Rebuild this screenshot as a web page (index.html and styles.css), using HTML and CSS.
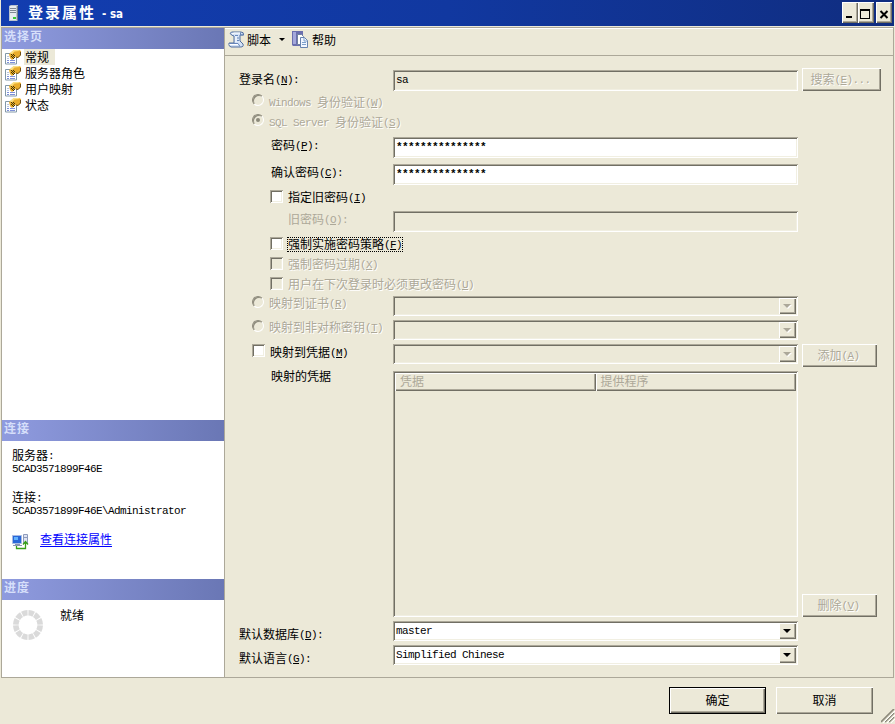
FILE: index.html
```html
<!DOCTYPE html>
<html lang="zh-CN">
<head>
<meta charset="utf-8">
<title>登录属性 - sa</title>
<link rel="stylesheet" href="styles.css">
</head>
<body>
<svg width="0" height="0" class="defs" aria-hidden="true">
  <symbol id="page" viewBox="0 0 16 16">
    <path d="M.5 4.500h11v10.500H.5z" fill="#fff" stroke="#8298a8"/>
    <path d="M2 11.500h2m1 0h5M2 13.500h2m1 0h5" stroke="#7d8fd8"/>
    <path d="M2 7.500h2M2 9.500h2" stroke="#b9c5df"/>
    <path d="M4 5l5-4h5l2 1v4l-3 3-3-1-3 3-2-2z" fill="#e9ad2c"/>
    <path d="M5 4l3.500-3h5l1 1-5 .5-3 3z" fill="#fbe184"/>
    <path d="M15.500 3v3L13 8.500l-2-.5" fill="none" stroke="#6e4f18"/>
    <path d="M6 5h1v1H6zm2 0h1v1H8zM7 6h1v1H7zm2 0h1v1H9zM6 7h1v1H6zm2 0h1v1H8zM7 8h1v1H7zm2 0h1v1H9zM8 9h1v1H8z" fill="#423508"/>
  </symbol>
  <symbol id="grip" viewBox="0 0 14 14">
    <path d="M0 13L13 0M4 13l9-9M8 13l5-5" stroke="#8d8a7c" stroke-width="1.700"/>
    <path d="M2 14L14 2M6 14l8-8M10 14l4-4" stroke="#fff"/>
  </symbol>
</svg>
<header class="titlebar">
  <svg class="server" width="12" height="18" viewBox="0 0 12 18"><path d="M1 2l2-1h7v15l-1 1H1z" fill="#b9c3cf"/><path d="M2 2h6v14H2z" fill="#e6ebf0"/><path d="M9 2h1v14H9z" fill="#6f7d8d"/><path d="M2 4.500h6M2 6.500h6M2 8.500h6" stroke="#7d8792"/><path d="M5 13h3v2H5z" fill="#35c837"/></svg>
  <h1>登录属性</h1><span class="who">- sa</span>
  <div class="wbtns">
    <button><svg width="15" height="21"><path d="M4 14h6v2H4z"/></svg></button>
    <button><svg width="15" height="21"><path d="M2 7h10v10H2zM3 9v7h8V9z" fill-rule="evenodd"/></svg></button>
    <button class="close"><svg width="15" height="21"><path d="M4.500 9l7 7m0-7l-7 7" stroke="#000" stroke-width="2"/></svg></button>
  </div>
</header>
<div class="body">
  <aside>
    <h2>选择页</h2>
    <ul class="pages">
      <li><svg><use href="#page"/></svg><span class="sel">常规</span></li>
      <li><svg><use href="#page"/></svg><span>服务器角色</span></li>
      <li><svg><use href="#page"/></svg><span>用户映射</span></li>
      <li><svg><use href="#page"/></svg><span>状态</span></li>
    </ul>
    <h2>连接</h2>
    <div class="conn">
      <p>服务器<i>:</i></p><p><i>5CAD3571899F46E</i></p>
      <p class="second">连接<i>:</i></p><p><i>5CAD3571899F46E\Administrator</i></p>
      <div class="link"><svg width="17" height="16" viewBox="0 0 17 16"><path d="M.5 1.500h9v8h-9z" fill="#2867d8" stroke="#a9bbe4"/><path d="M2 3h4v3H2z" fill="#63b3ff"/><path d="M3 10h5v1h2v1H1v-1h2z" fill="#8793b3"/><path d="M11.500.5h4v9h-4z" fill="#dfe4f3" stroke="#8e9bbb"/><path d="M12 3.500h3" stroke="#8e9bbb"/><path d="M4.500 12v2.500h9V9M11 10.500l2.500-3 2.500 3" fill="none" stroke="#38a018" stroke-width="1.300"/></svg><a>查看连接属性</a></div>
    </div>
    <h2>进度</h2>
    <div class="progress">
      <svg width="32" height="32" viewBox="-16 -16 32 32"><circle r="12.200" fill="none" stroke="#dadada" stroke-width="5.600" pathLength="120" stroke-dasharray="8.500 1.500" stroke-dashoffset="-.75"/></svg>
      <span>就绪</span>
    </div>
  </aside>
  <main>
    <div class="toolbar">
      <svg width="17" height="17" viewBox="0 0 17 17"><path d="M3.500 1H13q3 0 2.500 3H12v6l3 3q1 3-2.500 3H3q-3-1-2-4h5V5L3.500 4Q1 2 3.500 1z" fill="#d5e3f7" stroke="#4f6c9d"/><path d="M4 3l2-1h6M8 5v6M1.500 13.500h9" fill="none" stroke="#fff"/><path d="M7 4.500h3M9 7h2M9 9.500h2M2 12.500h8l2 3M12.500 1.500V4h3" fill="none" stroke="#6786ba"/></svg>
      <span class="t1">脚本</span><svg class="tri" width="6" height="3"><path d="M0 0h6L3 3z"/></svg>
      <svg class="help" width="16" height="17" viewBox="0 0 16 17"><path d="M0 0h11v15H1l-1-1z" fill="#6b6fae"/><path d="M1 1h3v12H1z" fill="#a4a8db"/><path d="M5.500 3.500h4l2 2v8h-6z" fill="#fff" stroke="#71829f"/><path d="M8.500 6.500h4l3 3v7h-7z" fill="#f2f7ff" stroke="#6783ae"/><path d="M10 11.500h4M10 13.500h4M12 7v3h3" fill="none" stroke="#7ca0cc"/></svg>
      <span>帮助</span>
    </div>
    <form class="form">
      <div class="row r-name"><label>登录名<i>(<u>N</u>):</i></label><div class="field off"><i>sa</i></div><button class="btn wide off">搜索<i>(<u>E</u>)...</i></button></div>
      <div class="row dis in1"><b class="radio"></b><label><i>Windows </i>身份验证<i>(<u>W</u>)</i></label></div>
      <div class="row dis in1"><b class="radio on"></b><label><i>SQL Server </i>身份验证<i>(<u>S</u>)</i></label></div>
      <div class="row r28 in2"><label>密码<i>(<u>P</u>):</i></label><div class="field pass"><i>***************</i></div></div>
      <div class="row r27 in2"><label>确认密码<i>(<u>C</u>):</i></label><div class="field pass"><i>***************</i></div></div>
      <div class="row in2c"><b class="check"></b><label>指定旧密码<i>(<u>I</u>)</i></label></div>
      <div class="row r27 in3 flat"><label>旧密码<i>(<u>O</u>):</i></label><div class="field off"></div></div>
      <div class="row in2c"><b class="check"></b><label class="focus">强制实施密码策略<i>(<u>F</u>)</i></label></div>
      <div class="row in2c dis"><b class="check"></b><label>强制密码过期<i>(<u>X</u>)</i></label></div>
      <div class="row in2c dis"><b class="check"></b><label>用户在下次登录时必须更改密码<i>(<u>U</u>)</i></label></div>
      <div class="row r24 dis in1"><b class="radio"></b><label>映射到证书<i>(<u>R</u>)</i></label><div class="field combo off"><span class="drop"></span></div></div>
      <div class="row r24 dis in1"><b class="radio"></b><label>映射到非对称密钥<i>(<u>T</u>)</i></label><div class="field combo off"><span class="drop"></span></div></div>
      <div class="row r-cred in1"><b class="check"></b><label>映射到凭据<i>(<u>M</u>)</i></label><div class="field combo off"><span class="drop"></span></div><button class="btn off">添加<i>(<u>A</u>)</i></button></div>
      <div class="row r-table in2"><label>映射的凭据</label><div class="field table"><div class="cols"><span>凭据</span><span>提供程序</span></div></div><button class="btn off del">删除<i>(<u>V</u>)</i></button></div>
      <div class="row r-def"><label>默认数据库<i>(<u>D</u>):</i></label><div class="field combo"><i>master</i><span class="drop"></span></div></div>
      <div class="row r-def"><label>默认语言<i>(<u>G</u>):</i></label><div class="field combo"><i>Simplified Chinese</i><span class="drop"></span></div></div>
    </form>
  </main>
</div>
<footer>
  <button class="btn ok">确定</button><button class="btn cancel">取消</button>
  <svg class="grip" width="14" height="14"><use href="#grip"/></svg>
</footer>
</body>
</html>
```
FILE: styles.css
```css
* { box-sizing: border-box; }
body {
  margin: 0; width: 895px; height: 724px; overflow: hidden; background: #ece9d8; color: #000;
  font: 12px/16px "Noto Sans CJK SC", sans-serif;
  display: flex; flex-direction: column;
}
.defs { position: absolute; }
svg { display: block; flex: none; }
p, h1, h2, ul { margin: 0; padding: 0; list-style: none; }
i { font: normal 11px/12px "Liberation Mono", monospace; letter-spacing: -0.6px; white-space: pre; }
label i, .btn i, .conn i { vertical-align: 1px; }
u { text-underline-offset: 1px; }
button { border: 0; padding: 0; margin: 0; font: inherit; color: inherit; background: #ece9d8; }

.titlebar { height: 26px; margin: 0 1px; flex: none; display: flex; align-items: center; color: #fff; background: linear-gradient(90deg, #123db0, #1138a0 50%, #102d80); }
.server { margin-left: 7px; }
h1 { font-size: 15px; line-height: 24px; letter-spacing: 2px; margin: -2px 0 0 8px; font-weight: 700; }
.who { font: bold 11.5px/20px "DejaVu Sans Condensed", "DejaVu Sans", sans-serif; margin: 1px 0 0 6px; }
.wbtns { display: flex; margin: 0 2px 1px auto; }
.wbtns button { width: 16px; height: 21px; box-shadow: inset 1px 1px #fff, inset -1px -1px #716f64, inset -2px -2px #aca899; }
.wbtns .close { margin-left: 2px; }

.body { height: 651px; flex: none; margin: 1px 1px 0 0; display: flex; }
aside { width: 223px; margin-left: 1px; flex: none; background: #fff; border: 1px solid #aca899; border-right: 0; display: flex; flex-direction: column; }
h2 { height: 21px; flex: none; padding-left: 2px; font-size: 12px; line-height: 16px; letter-spacing: 1px; color: #d6dffa; background: linear-gradient(90deg, #8f9bdf, #6a77b5); }
.pages { height: 371px; }
.pages li { display: flex; height: 16px; padding-left: 3px; }
.pages svg { width: 16px; height: 16px; }
.pages span { margin-left: 3px; padding: 0 1px; height: 16px; line-height: 15px; }
.pages .sel { background: #ece9d8; width: 31px; }
.conn { height: 138px; padding: 7px 0 0 10px; }
.conn p { height: 13px; line-height: 14px; white-space: nowrap; }
.conn .second { margin-top: 16px; }
.link { display: flex; margin-top: 15px; }
.link svg { margin-top: 3px; }
.link a { margin-left: 11px; color: #00f; text-decoration: underline; text-underline-offset: 2px; }
.progress { display: flex; padding: 7px 0 0 10px; }
.progress svg { margin-top: 2px; }
.progress span { margin-left: 16px; }

main { flex: 1; border: 1px solid #aca899; box-shadow: inset 0 1px #fff; }
.toolbar { height: 28px; border-bottom: 1px solid #aca899; display: flex; align-items: center; padding: 0 0 4px 3px; }
.t1 { margin-left: 2px; }
.tri { margin: 0 7px 0 8px; }
.help { margin-right: 4px; }

.form { padding: 12px 0 0 14px; }
.row { height: 20px; display: flex; align-items: flex-start; padding-top: 2px; }
.row label { white-space: nowrap; line-height: 16px; width: 154px; flex: none; }
.in1 { padding-left: 13px; }
.in1 label { width: 124px; margin-left: 5px; }
.in1 .check + label { width: 123px; }
.in2 { padding-left: 32px; }
.in2 label { width: 122px; }
.in3 { padding-left: 49px; }
.in3 label { width: 105px; }
.in2c { padding-left: 31px; }
.in2c label { margin-left: 5px; width: auto; }
.r-name { height: 24px; }
.r-name label { margin-top: 1px; }
.r28 { height: 28px; padding-top: 5px; }
.r27 { height: 27px; padding-top: 4px; }
.r27 label { margin-top: 0; }
.r24, .r-def { height: 24px; }
.r24 label { margin-top: -1px; }
.r-def label { margin-top: 5px; }
.r-cred { height: 27px; }
.r-table { height: 250px; }
.r-table label { margin-top: -3px; }
.dis label, .off { color: #aca899; text-shadow: 1px 1px #fff; }
.flat label { color: #aca899; }
.in2c label { margin-top: 0; }

.field { width: 405px; height: 21px; flex: none; background: #fff; padding: 3px 3px; line-height: 12px; display: flex;
  box-shadow: inset 1px 1px #aca899, inset -1px -1px #fff, inset 2px 2px #716f64, inset -2px -2px #f1efe2; }
.field.off { background: #ece9d8; }
.field > i { margin-top: 2px; }
.pass > i { font-weight: bold; margin-top: 1px; }
.r-name .field i { color: #000; text-shadow: none; margin-top: 1px; }
.combo { height: 20px; padding: 2px 2px 2px 3px; }
.drop { width: 17px; height: 16px; margin-left: auto; background: #ece9d8; display: flex; align-items: center; justify-content: center;
  box-shadow: inset 1px 1px #fff, inset -1px -1px #716f64, inset -2px -2px #aca899; }
.drop::before { content: ""; border: 4px solid transparent; border-top-color: #000; border-bottom: 0; margin: 0 2px 0 0; }
.off .drop::before { border-top-color: #aca899; filter: drop-shadow(1px 1px #fff); }
.table { height: 246px; padding: 2px; background: #ece9d8; }
.cols { display: flex; height: 18px; width: 401px; color: #aca899; }
.cols span { flex: 1; padding-left: 5px; line-height: 16px; box-shadow: inset 1px 1px #fff, inset -1px -1px #716f64, inset -2px -2px #aca899; }

.btn { width: 75px; height: 23px; margin-left: 4px; flex: none; line-height: 19px; padding: 0 2px 2px 0; box-shadow: inset 1px 1px #fff, inset -1px -1px #716f64, inset -2px -2px #aca899; }
.btn.wide { width: 79px; margin-top: -2px; }
.del { margin-top: 223px; }

.radio { width: 12px; height: 12px; flex: none; border-radius: 50%; border: 1px solid; border-color: #8c897b #fff #fff #8c897b; box-shadow: inset 1px 1px #8c897b; display: flex; align-items: center; justify-content: center; }
.radio.on::before { content: ""; width: 4px; height: 4px; border-radius: 50%; background: #8c897b; }
.check { width: 13px; height: 13px; flex: none; background: #fff; box-shadow: inset 1px 1px #aca899, inset -1px -1px #fff, inset 2px 2px #716f64, inset -2px -2px #f1efe2; }
.in2c .check { margin-top: 1px; }
.dis .check { background: #ece9d8; }
.in2c .focus { outline: 1px dotted #000; height: 13px; margin-top: 2px; line-height: 12px; }

footer { flex: 1; display: flex; padding: 9px 0 0 669px; position: relative; }
footer .btn { width: 97px; height: 27px; line-height: 23px; margin: 0; padding-right: 0; }
footer .ok { border: 1px solid #000; line-height: 21px; }
footer .cancel { margin-left: 10px; }
.grip { position: absolute; right: 0; bottom: 1px; }
```
